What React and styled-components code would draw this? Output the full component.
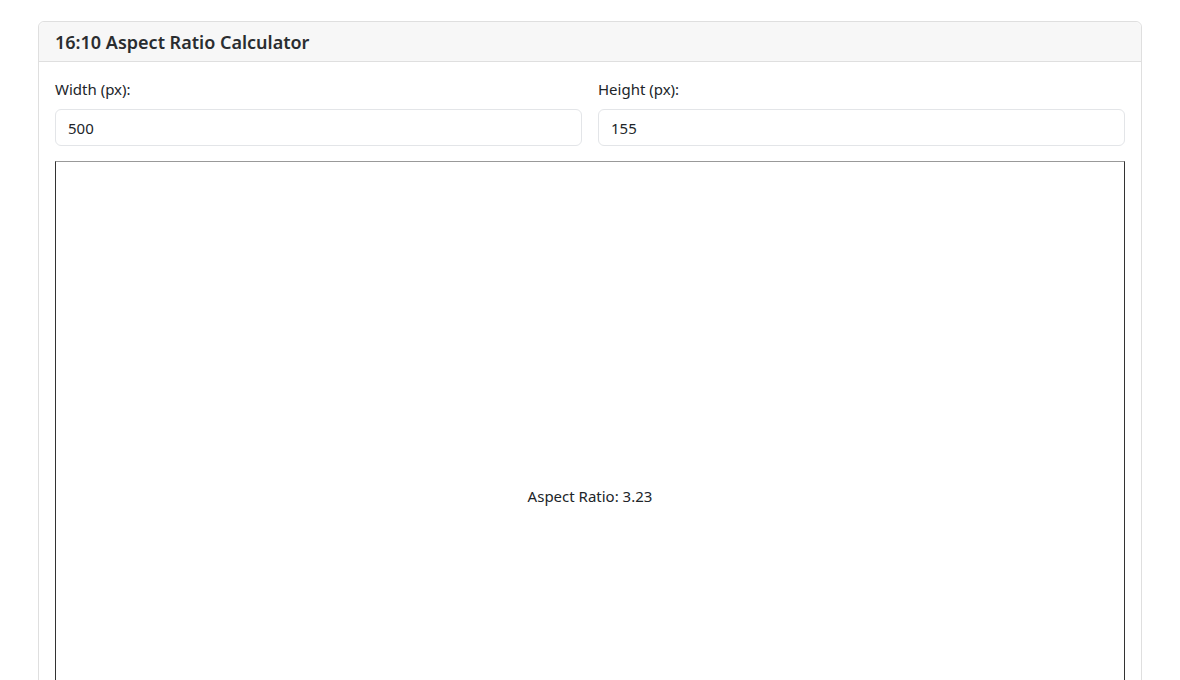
import React, { useState } from 'react';
import styled, { createGlobalStyle } from 'styled-components';

const GlobalStyle = createGlobalStyle`
    body {
        margin: 0;
        background: #fff;
        font-family: "Noto Sans", "Open Sans", sans-serif;
        color: #212529;
    }
`;

const Card = styled.div`
    width: 1104px;
    margin: 21px auto 0 38px;
    border: 1px solid #dfdfdf;
    border-radius: 6px;
    box-sizing: border-box;
    background: #fff;
`;

const CardHeader = styled.div`
    background: #f7f7f7;
    border-bottom: 1px solid #dfdfdf;
    border-radius: 6px 6px 0 0;
    padding: 0 16px;
    height: 39px;
    display: flex;
    align-items: center;
`;

const Title = styled.h5`
    margin: 0;
    font-size: 18px;
    font-weight: 600;
    color: #2a2d30;
`;

const CardBody = styled.div`
    padding: 15px 16px 16px;
`;

const Row = styled.div`
    display: grid;
    grid-template-columns: 1fr 1fr;
    gap: 16px;
`;

const Field = styled.div`
    display: flex;
    flex-direction: column;
`;

const Label = styled.label`
    font-size: 15px;
    line-height: 24px;
    margin-bottom: 8px;
    color: #212529;
`;

const Input = styled.input`
    height: 37px;
    box-sizing: border-box;
    border: 1px solid #e3e5e8;
    border-radius: 6px;
    padding: 6px 12px;
    font-family: inherit;
    font-size: 15px;
    color: #212529;
    outline: none;
`;

const Preview = styled.div`
    margin-top: 15px;
    height: 668px;
    border: 1px solid #333;
    border-top-color: #999;
    display: flex;
    align-items: center;
    justify-content: center;
    font-size: 15px;
    color: #212529;
`;

export default function App() {
    const [width, setWidth] = useState('500');
    const [height, setHeight] = useState('155');

    const w = parseFloat(width);
    const h = parseFloat(height);
    const ratio = w > 0 && h > 0 ? (w / h).toFixed(2) : '-';

    return (
        <>
            <GlobalStyle />
            <Card>
                <CardHeader>
                    <Title>16:10 Aspect Ratio Calculator</Title>
                </CardHeader>
                <CardBody>
                    <Row>
                        <Field>
                            <Label htmlFor="w">Width (px):</Label>
                            <Input id="w" value={width} onChange={e => setWidth(e.target.value)} />
                        </Field>
                        <Field>
                            <Label htmlFor="h">Height (px):</Label>
                            <Input id="h" value={height} onChange={e => setHeight(e.target.value)} />
                        </Field>
                    </Row>
                    <Preview>Aspect Ratio: {ratio}</Preview>
                </CardBody>
            </Card>
        </>
    );
}
